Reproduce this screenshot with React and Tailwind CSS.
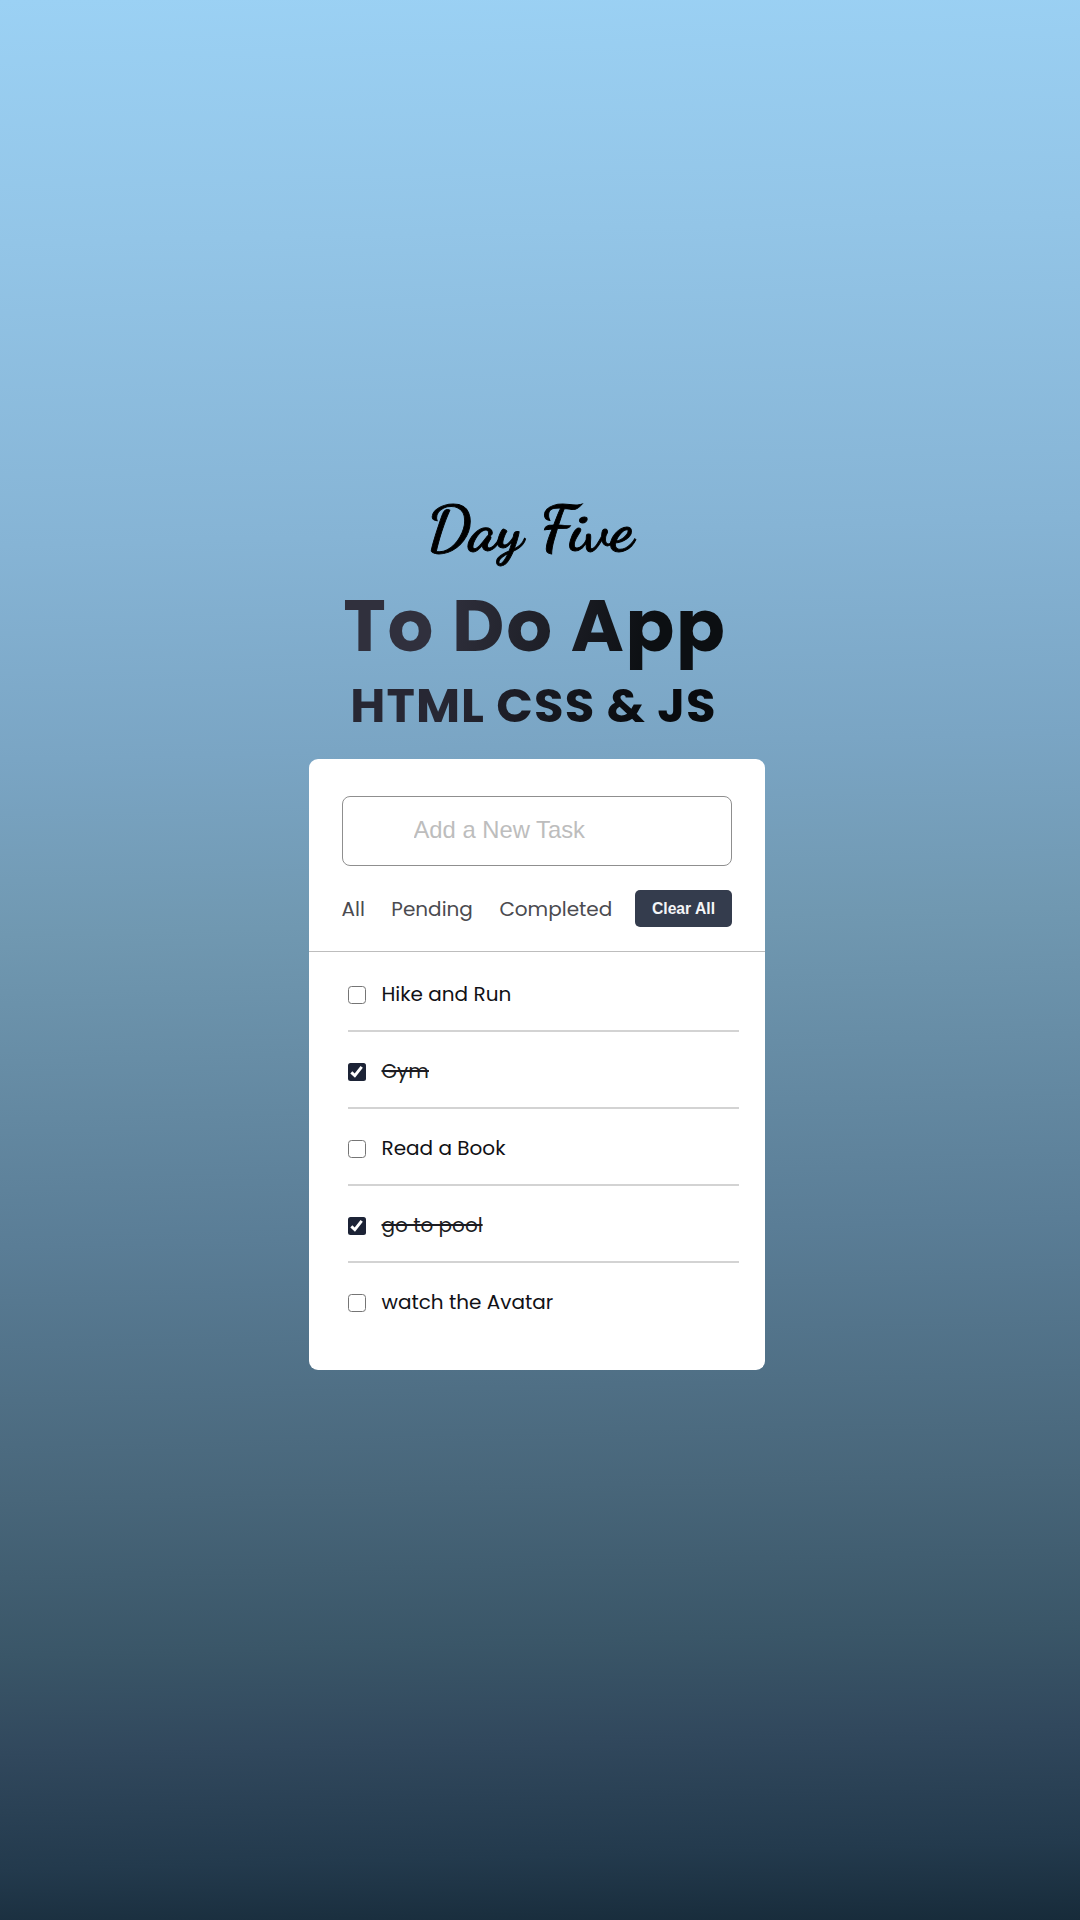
import { useState } from "react";

const TASKS = [
  { name: "Hike and Run", done: false },
  { name: "Gym", done: true },
  { name: "Read a Book", done: false },
  { name: "go to pool", done: true },
  { name: "watch the Avatar", done: false },
];

function Checkbox({ checked, onChange, label }) {
  return (
    <button
      type="button"
      role="checkbox"
      aria-checked={checked}
      aria-label={label}
      onClick={onChange}
      className={
        checked
          ? "flex size-[17.5px] shrink-0 items-center justify-center rounded-[2.5px] bg-[#1c2336]"
          : "size-[17.5px] shrink-0 rounded-[3.5px] border-[1.5px] border-[#757575] bg-white"
      }
    >
      {checked && (
        <svg viewBox="0 0 18 18" className="size-[17.5px]" fill="none" stroke="#fff" strokeWidth="3">
          <path d="M3.4 9.6 L7 12.9 L14.1 3.9" />
        </svg>
      )}
    </button>
  );
}

function Task({ task, onToggle }) {
  return (
    <li className="flex h-[77px] items-center gap-4 border-b-2 border-[#d3d3d3] pt-[5px] last:border-transparent">
      <Checkbox checked={task.done} onChange={onToggle} label={task.name} />
      <span
        className={
          task.done
            ? "-mt-[2px] text-[20px] leading-[30px] text-[#1c1c22] line-through decoration-[1.5px]"
            : "-mt-[2px] text-[20px] leading-[30px] text-[#111116]"
        }
      >
        {task.name}
      </span>
    </li>
  );
}

export default function App() {
  const [tasks, setTasks] = useState(TASKS);
  const toggle = (i) => setTasks(tasks.map((t, n) => (n === i ? { ...t, done: !t.done } : t)));

  return (
    <div className="flex h-[1920px] w-[1080px] flex-col items-center bg-[linear-gradient(178.5deg,#9bd1f4_0%,#93c5e7_12.5%,#86b4d5_28%,#7aa5c4_39%,#7098b1_48%,#5a7d96_64%,#48667a_77%,#3a5668_85%,#31485d_90%,#233a4d_96%,#172b3a_100%)] pt-[489px] font-[Poppins,Lato,sans-serif]">
      <p className="mr-[20px] font-['Dancing_Script',cursive] text-[63.5px] leading-[80px] font-bold text-black [-webkit-text-stroke:0.9px_#000]">
        Day Five
      </p>
      <h1 className="mt-[17px] mr-[10px] bg-[linear-gradient(100deg,#30303d_25%,#0c0f12_80%)] bg-clip-text pb-1 text-[72px] leading-[80px] font-bold tracking-[1.7px] text-transparent">
        To Do App
      </h1>
      <h2 className="mt-2 mr-[13px] bg-[linear-gradient(100deg,#272733_25%,#090b0e_80%)] bg-clip-text text-[48px] leading-[56px] font-bold tracking-[1.1px] text-transparent">
        HTML CSS &amp; JS
      </h2>

      <main className="mr-[6.5px] mt-[25px] flex h-[611px] w-[456.5px] flex-col rounded-[9px] bg-white">
        <header className="border-b border-[#bdbdbd] px-[33px] pt-[37px] pb-6">
          <input
            placeholder="Add a New Task"
            className="block h-[70px] w-full rounded-[8px] border-[1.5px] border-[#8f8f8f] pb-[3px] pl-[71px] font-['Liberation_Sans',sans-serif] text-[23.8px] outline-none placeholder:text-[#bdbdbd]"
          />
          <div className="mt-6 flex h-[37px] items-center justify-between">
            <nav className="flex gap-[26.5px] text-[20px] leading-[30px] text-[#4b4b50]">
              <span>All</span>
              <span>Pending</span>
              <span>Completed</span>
            </nav>
            <button
              type="button"
              className="h-[37px] w-[97px] rounded-[5px] bg-[#343c4d] font-['Liberation_Sans',sans-serif] text-[15.7px] font-bold text-[#f4f5f7]"
            >
              Clear All
            </button>
          </div>
        </header>
        <ul className="mr-[26.5px] ml-[39.5px] pt-[3px]">
          {tasks.map((task, i) => (
            <Task key={task.name} task={task} onToggle={() => toggle(i)} />
          ))}
        </ul>
      </main>
    </div>
  );
}
